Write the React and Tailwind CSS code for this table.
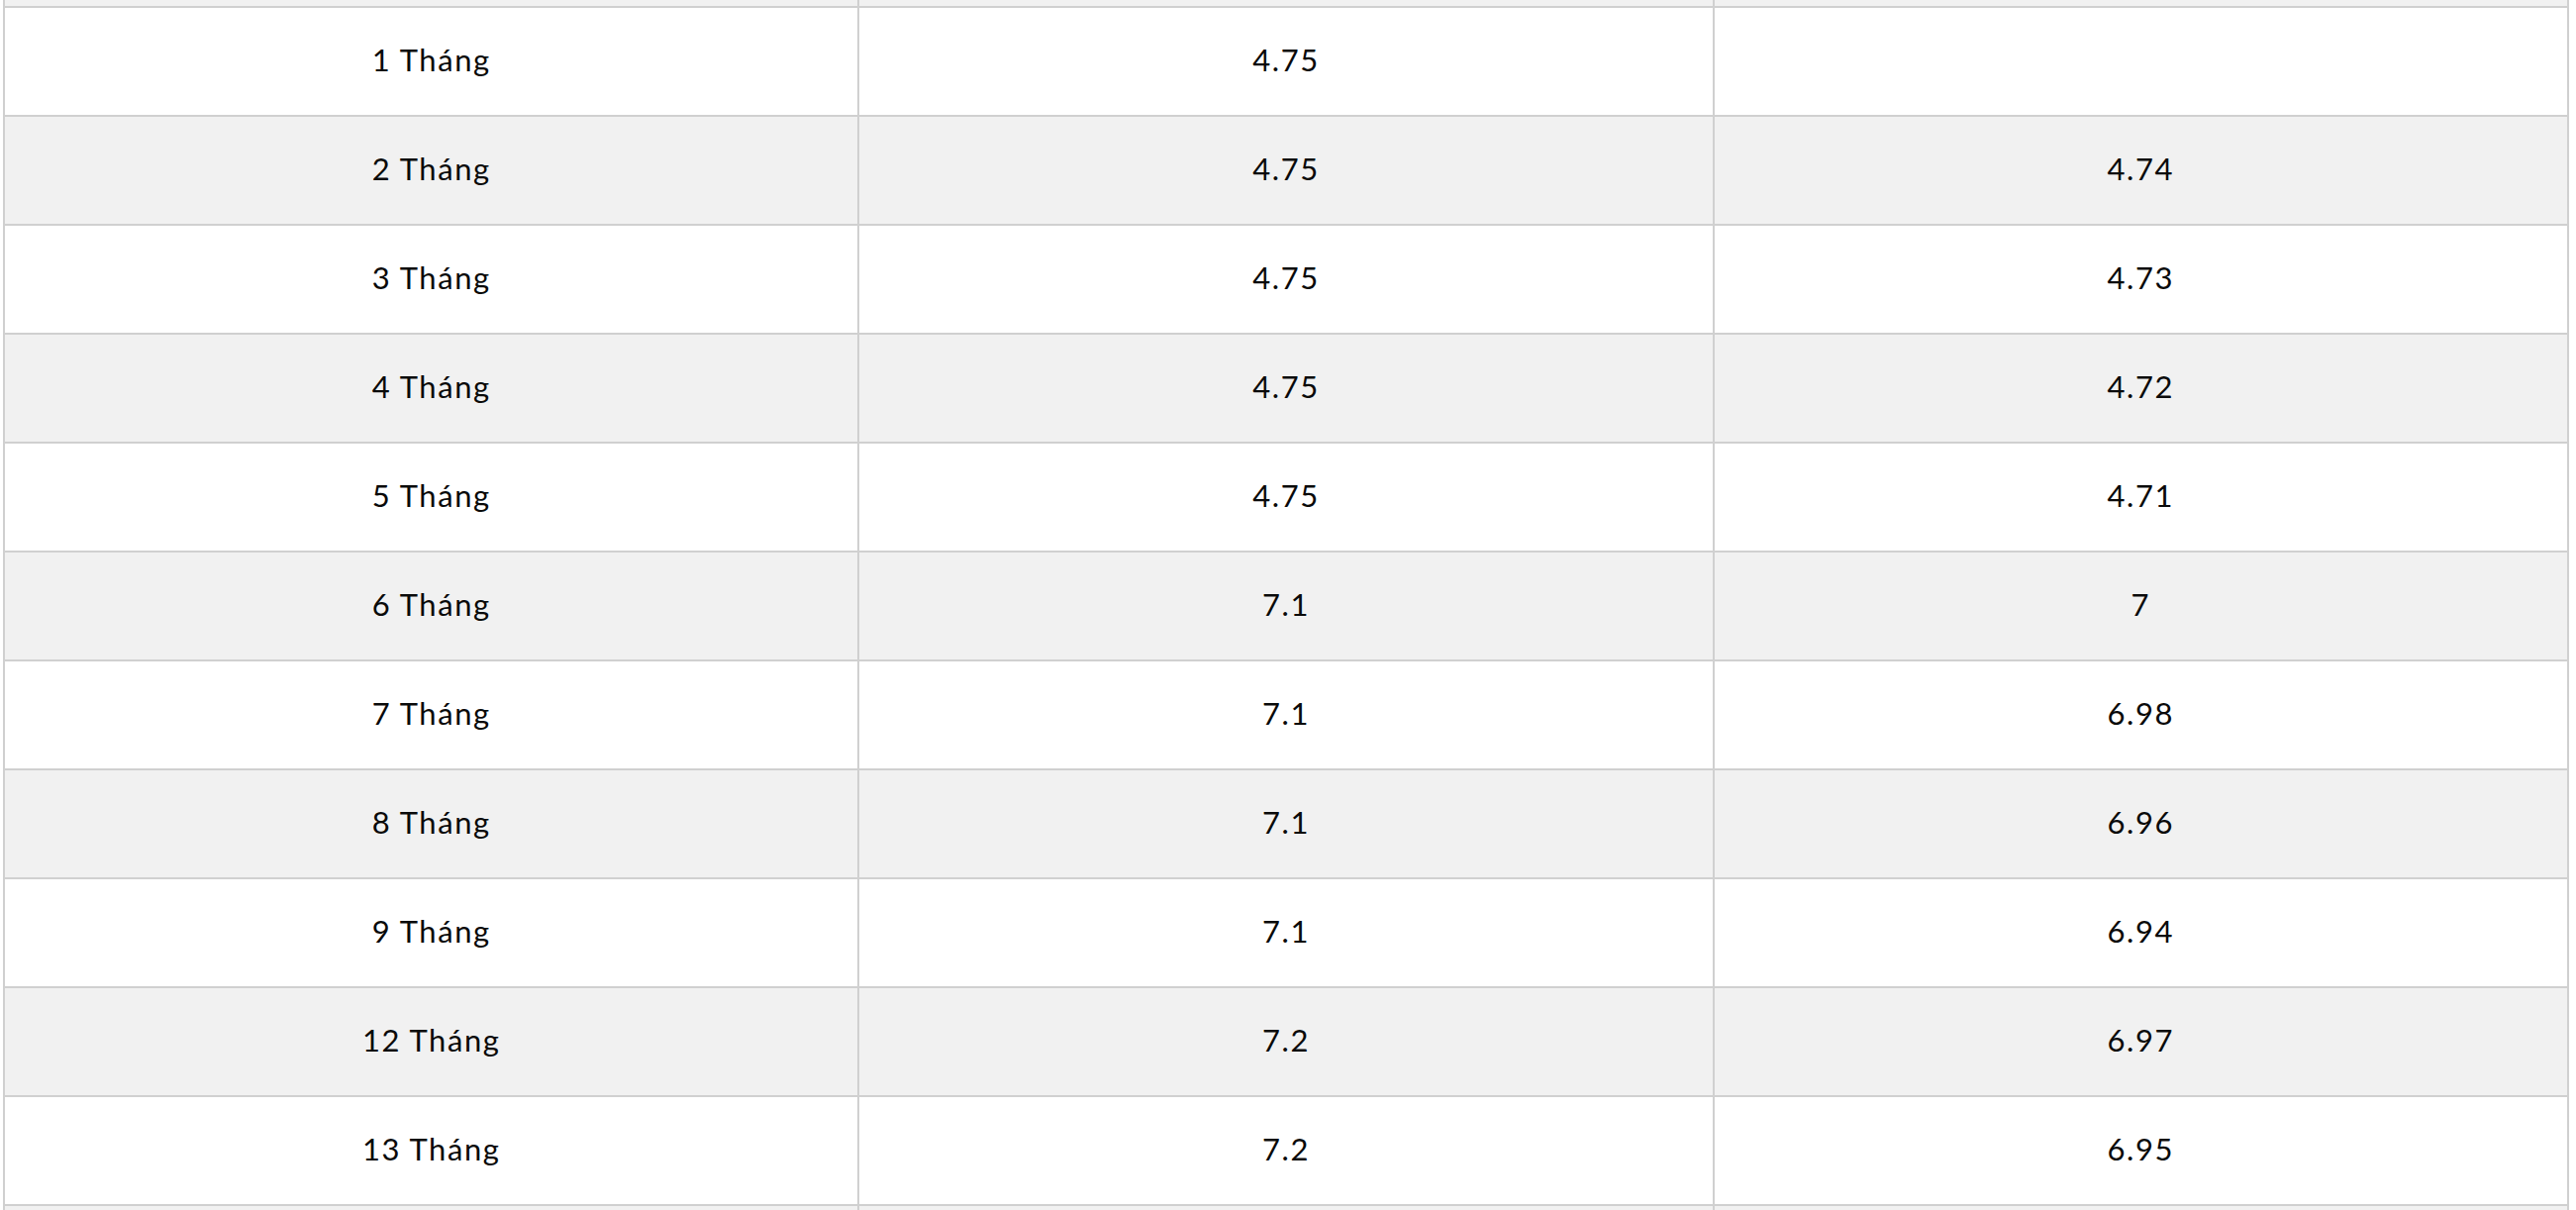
const rows = [
  ['1 Tháng', '4.75', ''],
  ['2 Tháng', '4.75', '4.74'],
  ['3 Tháng', '4.75', '4.73'],
  ['4 Tháng', '4.75', '4.72'],
  ['5 Tháng', '4.75', '4.71'],
  ['6 Tháng', '7.1', '7'],
  ['7 Tháng', '7.1', '6.98'],
  ['8 Tháng', '7.1', '6.96'],
  ['9 Tháng', '7.1', '6.94'],
  ['12 Tháng', '7.2', '6.97'],
  ['13 Tháng', '7.2', '6.95'],
];

function StubRow({ top }) {
  return [0, 1, 2].map((i) => (
    <div
      key={`${top ? 't' : 'b'}${i}`}
      className={`bg-[#f1f1f1] border-r-2 border-[#d0d0d0] ${top ? 'h-[8px] border-b-2' : 'h-[6px]'}`}
    />
  ));
}

export default function App() {
  return (
    <div className="w-[2602px] h-[1222px] overflow-hidden bg-white font-['Lato','Noto_Sans',sans-serif] text-[#0a0a0a]">
      <div className="ml-[3px] w-[2592px] grid grid-cols-3 border-l-2 border-[#d0d0d0]">
        <StubRow top />
        {rows.map((r, ri) =>
          r.map((cell, ci) => (
            <div
              key={`${ri}-${ci}`}
              className={`h-[110px] flex items-center justify-center pb-[4px] border-r-2 border-b-2 border-[#d0d0d0] text-[31px] tracking-[0.05em] ${
                ri % 2 === 1 ? 'bg-[#f1f1f1]' : 'bg-white'
              }`}
            >
              {cell}
            </div>
          ))
        )}
        <StubRow />
      </div>
    </div>
  );
}
